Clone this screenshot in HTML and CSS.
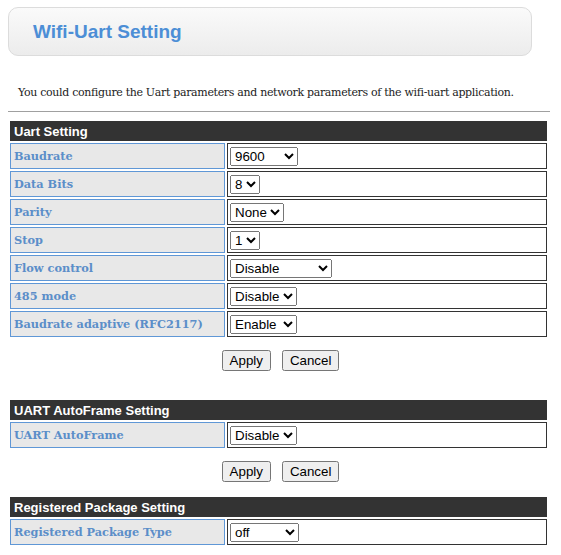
FILE: index.html
```html
<!DOCTYPE html>
<html lang="en">
<head>
    <meta charset="UTF-8">
    <title>Wifi-Uart Setting</title>
    <link rel="stylesheet" href="styles.css">
</head>
<body>
    <div class="title-box">
        <h1>Wifi-Uart Setting</h1>
    </div>

    <p class="intro">You could configure the Uart parameters and network parameters of the wifi-uart application.</p>
    <hr class="sep">

    <table class="setting first">
        <tr><td class="head" colspan="2">Uart Setting</td></tr>
        <tr>
            <td class="label">Baudrate</td>
            <td class="value">
                <select class="w-baud">
                    <option>9600</option><option>19200</option><option>38400</option><option>57600</option><option>115200</option>
                </select>
            </td>
        </tr>
        <tr>
            <td class="label">Data Bits</td>
            <td class="value"><select><option>8</option><option>7</option></select></td>
        </tr>
        <tr>
            <td class="label">Parity</td>
            <td class="value"><select><option>None</option><option>Odd</option><option>Even</option></select></td>
        </tr>
        <tr>
            <td class="label">Stop</td>
            <td class="value"><select><option>1</option><option>2</option></select></td>
        </tr>
        <tr>
            <td class="label">Flow control</td>
            <td class="value"><select class="w-flow"><option>Disable</option><option>Enable</option></select></td>
        </tr>
        <tr>
            <td class="label">485 mode</td>
            <td class="value"><select><option>Disable</option><option>Enable</option></select></td>
        </tr>
        <tr>
            <td class="label">Baudrate adaptive (RFC2117)</td>
            <td class="value"><select><option>Enable</option><option>Disable</option></select></td>
        </tr>
    </table>
    <div class="buttons">
        <button>Apply</button>
        <button>Cancel</button>
    </div>

    <table class="setting second">
        <tr><td class="head" colspan="2">UART AutoFrame Setting</td></tr>
        <tr>
            <td class="label">UART AutoFrame</td>
            <td class="value"><select><option>Disable</option><option>Enable</option></select></td>
        </tr>
    </table>
    <div class="buttons">
        <button>Apply</button>
        <button>Cancel</button>
    </div>

    <table class="setting third">
        <tr><td class="head" colspan="2">Registered Package Setting</td></tr>
        <tr>
            <td class="label">Registered Package Type</td>
            <td class="value"><select class="w-reg"><option>off</option><option>MAC</option><option>ID</option></select></td>
        </tr>
    </table>
</body>
</html>
```

FILE: styles.css
```css
body {
    margin: 7px 8px 8px 8px;
    font-family: "Liberation Sans", Arial, sans-serif;
    background: #fff;
}
.title-box {
    width: 522px;
    height: 47px;
    border: 1px solid #dcdcdc;
    border-radius: 10px;
    background: linear-gradient(to bottom, #fafafa, #ececec);
    display: flex;
    align-items: center;
}
.title-box h1 {
    margin: 1px 0 0 24px;
    font-size: 19px;
    font-weight: bold;
    color: #4c8ed6;
}
.intro {
    margin: 30px 0 0 10px;
    font-family: "DejaVu Serif", Georgia, serif;
    font-size: 11px;
    letter-spacing: -0.33px;
    color: #222;
}
.sep {
    width: 542px;
    margin: 12px 0 0 0;
    border: none;
    border-top: 1px solid #a0a0a0;
    height: 0;
}
.setting {
    width: 541px;
    border-spacing: 2px 2px;
}
.first { margin-top: 7px; }
.second { margin-top: 27px; }
.third { margin-top: 13px; }
.setting td {
    padding: 0;
}
.head {
    height: 20px;
    background: #333;
    color: #fff;
    font-size: 13px;
    font-weight: bold;
    padding-left: 4px !important;
}
.label {
    width: 210px;
    height: 24px;
    border: 1px solid #5f97d6;
    background: #e8e8e8;
    color: #5b8ec9;
    font-family: "DejaVu Serif", Georgia, serif;
    font-size: 11.3px;
    font-weight: bold;
    padding-left: 3px !important;
}
.value {
    height: 24px;
    border: 1px solid #333;
    padding-left: 2px !important;
}
select {
    font-family: "Liberation Sans", Arial, sans-serif;
    font-size: 13.33px;
}
.w-baud { width: 68px; }
.w-flow { width: 102px; }
.w-reg { width: 69px; }
.buttons {
    display: flex;
    justify-content: center;
    gap: 11px;
    margin: 11px 0 0 0;
}
.buttons button {
    font-family: "Liberation Sans", Arial, sans-serif;
    font-size: 13.33px;
    padding: 1px 6px;
}
```
